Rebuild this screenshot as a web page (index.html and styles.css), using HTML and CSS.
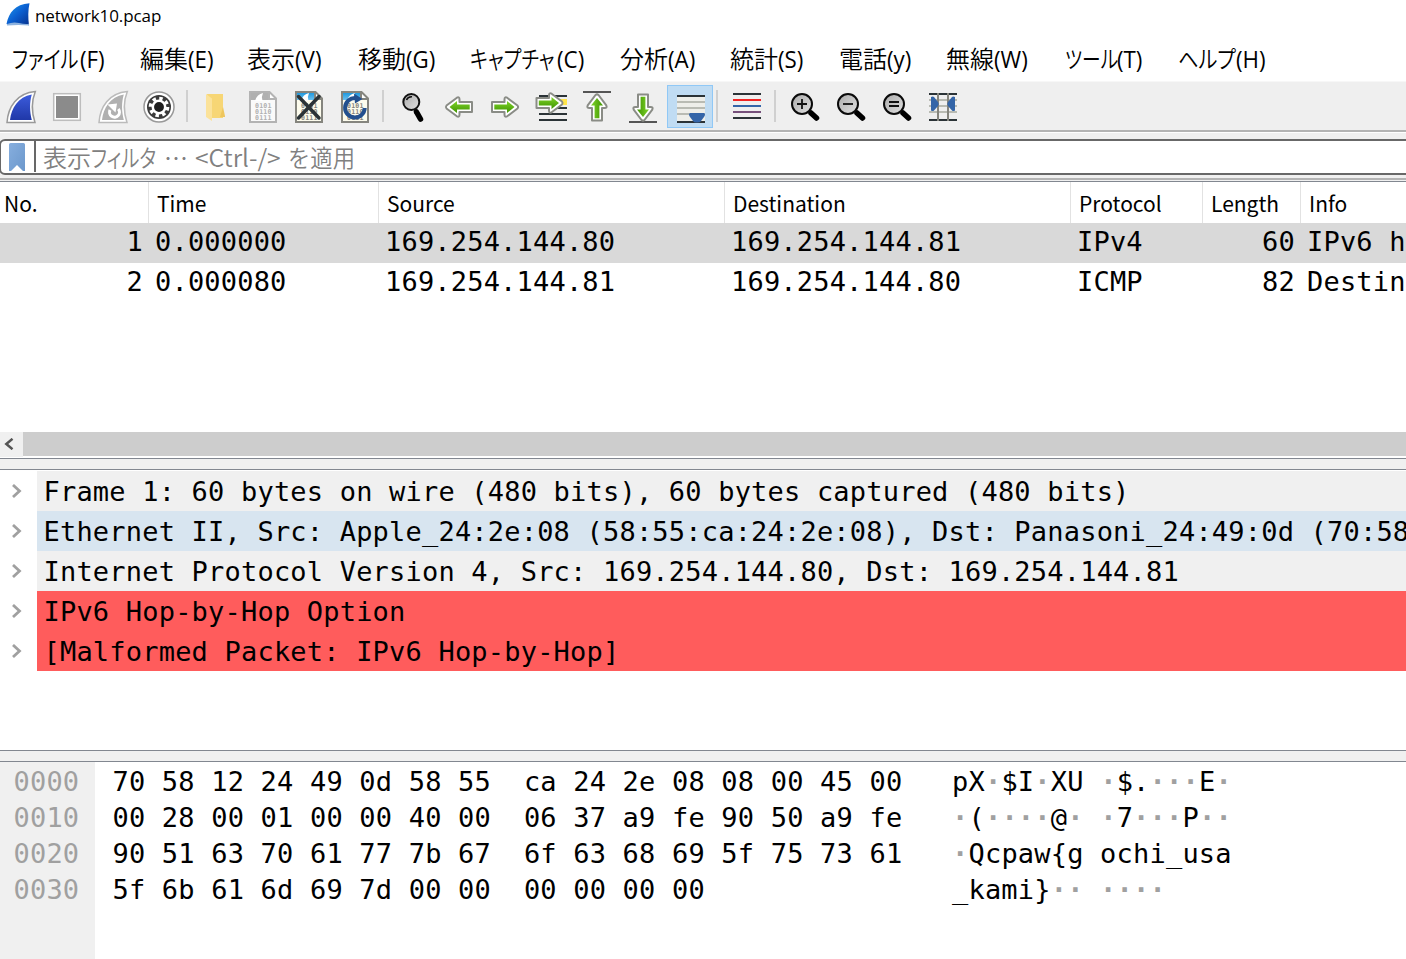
FILE: index.html
```html
<!DOCTYPE html>
<html lang="ja">
<head>
<meta charset="utf-8">
<title>network10.pcap</title>
<link rel="stylesheet" href="styles.css">
</head>
<body>
<svg class="defs" width="0" height="0">
  <defs>
    <linearGradient id="fin" x1="0" y1="0" x2="1" y2="1"><stop offset="0" stop-color="#1e9cf0"/><stop offset=".5" stop-color="#0b5fd0"/><stop offset="1" stop-color="#06308c"/></linearGradient>
    <linearGradient id="blue" x1="0" y1="0" x2="0" y2="1"><stop offset="0" stop-color="#3c5cdc"/><stop offset="1" stop-color="#2038a8"/></linearGradient>
    <linearGradient id="green" x1="0" y1="0" x2="0" y2="1"><stop offset="0" stop-color="#7fd42a"/><stop offset="1" stop-color="#3f9400"/></linearGradient>
    <linearGradient id="glass" x1="0" y1="0" x2="1" y2="1"><stop offset="0" stop-color="#aaa"/><stop offset="1" stop-color="#e2e2e2"/></linearGradient>
    <linearGradient id="ribbon" x1="0" y1="0" x2="1" y2="1"><stop offset="0" stop-color="#86aede"/><stop offset="1" stop-color="#6c98cc"/></linearGradient>
    <linearGradient id="sky" x1="0" y1="0" x2="0" y2="1"><stop offset="0" stop-color="#1593dc"/><stop offset="1" stop-color="#6cc0ee"/></linearGradient>
    <g id="arrow">
      <path d="M-12.500-5H0v-2.500q0-3 2.600-1.800L13-1.500q1.200 1.500 0 3L2.600 9.300Q0 10.500 0 7.500V5h-12.500z" fill="#fff" stroke="#8a8c86" stroke-width="2" stroke-linejoin="round"/>
      <path d="M-10.200-2.400H2.500V-6L10 0 2.500 6V2.400H-10.200z" fill="url(#green)"/>
    </g>
    <g id="lens">
      <path d="M7.500 7.500L13 12.500" stroke="#000" stroke-width="5.500" stroke-linecap="round"/>
      <circle cx="-1.500" cy="-1.500" r="10" fill="url(#glass)" stroke="#0a0a0a" stroke-width="2"/>
    </g>
    <g id="bits" font-family="DejaVu Sans Mono, monospace" font-size="6.600" font-weight="bold" letter-spacing=".2">
      <text x="6" y="16.800">0101</text><text x="6" y="22.800">0110</text><text x="6" y="28.700">0111</text>
    </g>
  </defs>
</svg>

<header class="titlebar">
  <svg width="26" height="26" viewBox="5 1 26 26"><path d="M6.500 24C9 12 15 4.500 29.500 3.200c-1.500 7-1.500 14-.5 22-5-2-16 1.500-22.500-1.200z" fill="url(#fin)"/><path d="M7 24q6-2.500 12-1t10 .8v1.700q-10-.8-22 0z" fill="#8db2de"/></svg>
  <span class="title">network10.pcap</span>
</header>

<nav class="menubar">
  <a class="m1"><span class="kana k1">ファイル</span><span class="lat">(F)</span></a>
  <a class="m2">編集<span class="lat">(E)</span></a>
  <a class="m3">表示<span class="lat">(V)</span></a>
  <a class="m4">移動<span class="lat">(G)</span></a>
  <a class="m5"><span class="kana k5">キャプチャ</span><span class="lat">(C)</span></a>
  <a class="m6">分析<span class="lat">(A)</span></a>
  <a class="m7">統計<span class="lat">(S)</span></a>
  <a class="m8">電話<span class="lat">(y)</span></a>
  <a class="m9">無線<span class="lat">(W)</span></a>
  <a class="m10"><span class="kana k10">ツール</span><span class="lat">(T)</span></a>
  <a class="m11"><span class="kana k11">ヘルプ</span><span class="lat">(H)</span></a>
</nav>

<div class="toolbar">
  <svg class="tool" viewBox="-2 82 46 48"><path d="M7 122.500C8 107 17 93 35.300 91.500 31.500 101 31.500 112 35 122.500z" fill="#fff" stroke="#999" stroke-width="1.500"/><path d="M10 120c1.500-12 8-23 21.800-25.500-2.400 8-2.200 17 0 25.500z" fill="url(#blue)"/></svg>
  <svg class="tool" viewBox="44 82 46 48"><rect x="53.700" y="93.700" width="26.600" height="26.600" fill="#fff" stroke="#bdbdbd" stroke-width="1.500"/><rect x="56" y="96" width="22" height="22" fill="#8b8b8b"/></svg>
  <svg class="tool" viewBox="90 82 46 48"><path d="M99 122.500C100 107 109 93 127.300 91.500 123.500 101 123.500 112 127 122.500z" fill="#fff" stroke="#bbb" stroke-width="1.500"/><path d="M102 120c1.500-12 8-23 21.800-25.500-2.400 8-2.200 17 0 25.500z" fill="#b0b0b0"/><path d="M118.300 109a5 5 0 1 1-8.300 1" fill="none" stroke="#fff" stroke-width="3"/><path d="M107.500 104.500l9.500-1-1.500 9z" fill="#fff"/></svg>
  <svg class="tool" viewBox="136 82 46 48"><circle cx="159" cy="107" r="15" fill="#fff" stroke="#999" stroke-width="1.500"/><circle cx="159" cy="107" r="12" fill="#3b3b3b"/><circle cx="159" cy="107" r="8.600" fill="none" stroke="#fff" stroke-width="3.500" stroke-dasharray="3.400 3.354"/><circle cx="159" cy="107" r="6.200" fill="#1e1e1e" stroke="#fff" stroke-width="2.500"/></svg>
  <i class="sep"></i>
  <svg class="tool" viewBox="194 82 46 48"><path d="M207 94h16v24h-12z" fill="#f7d675"/><path d="M223 107l2 9v1h-5z" fill="#eec65e"/><path d="M206 94l6 4.500v22.500l-6-4z" fill="#fbe29a"/></svg>
  <svg class="tool" viewBox="240 82 46 48"><path d="M250 92h20l6 6v24h-26z" fill="#fafafa"/><path d="M250 92h19v8h-19z" fill="#b0b0b0"/><path d="M255 101q2-7 8-8-2 4-.5 8z" fill="#fff"/><g transform="translate(249 91)" fill="#b0b0b0"><use href="#bits"/></g><path d="M269 92v7h7z" fill="#fff"/><path d="M250 92h19.500l6.500 6.500v23.500h-26zM269 92v7h7" fill="none" stroke="#b3b3b3" stroke-width="2"/></svg>
  <svg class="tool" viewBox="286 82 46 48"><path d="M296 92h20l6 6v24h-26z" fill="#fdfced"/><path d="M296 92h19v8h-19z" fill="url(#sky)"/><path d="M301 101q2-7 8-8-2 4-.5 8z" fill="#fff"/><g transform="translate(295 91)" fill="#85857d"><use href="#bits"/></g><path d="M315 92v7h7z" fill="#fff"/><path d="M296 92h19.500l6.500 6.500v23.500h-26zM315 92v7h7" fill="none" stroke="#85857e" stroke-width="2"/><path d="M298.500 96.500L319 118M319 96.500L298.500 118" stroke="#2b3337" stroke-width="3.500" stroke-linecap="round"/></svg>
  <svg class="tool" viewBox="332 82 46 48"><path d="M342 92h20l6 6v24h-26z" fill="#fdfced"/><path d="M342 92h19v8h-19z" fill="url(#sky)"/><path d="M347 101q2-7 8-8-2 4-.5 8z" fill="#fff"/><g transform="translate(341 91)" fill="#85857d"><use href="#bits"/></g><path d="M361 92v7h7z" fill="#fff"/><path d="M342 92h19.500l6.500 6.500v23.500h-26zM361 92v7h7" fill="none" stroke="#85857e" stroke-width="2"/><path d="M364.700 108a9.800 9.800 0 1 1-9.200-10" fill="none" stroke="#23508e" stroke-width="4"/><path d="M354 93.500l8.500 5.500-7.500 4.500z" fill="#23508e"/></svg>
  <i class="sep"></i>
  <svg class="tool" viewBox="390 82 46 48"><path d="M416.500 112l4 7" stroke="#000" stroke-width="5.500" stroke-linecap="round"/><path d="M413 107l3 4" stroke="#000" stroke-width="2.500"/><circle cx="411.300" cy="102" r="8" fill="url(#glass)" stroke="#111" stroke-width="2"/><path d="M406.500 100q1.500-3.500 5.500-3.200" fill="none" stroke="#111" stroke-width="1.500"/></svg>
  <svg class="tool" viewBox="436 82 46 48"><use href="#arrow" transform="translate(459.500 107) scale(-1 1)"/></svg>
  <svg class="tool" viewBox="482 82 46 48"><use href="#arrow" transform="translate(504.500 107)"/></svg>
  <svg class="tool" viewBox="528 82 46 48"><path d="M539 96h28M539 108h28M539 114h28M539 120h28" stroke="#2b3337" stroke-width="2"/><path d="M555 99h12v6h-12z" fill="#ffe44a"/><use href="#arrow" transform="translate(549 103)"/></svg>
  <svg class="tool" viewBox="574 82 46 48"><path d="M583 92h28" stroke="#555" stroke-width="2"/><use href="#arrow" transform="translate(597 108) rotate(-90)"/></svg>
  <svg class="tool" viewBox="620 82 46 48"><path d="M629 122h28" stroke="#555" stroke-width="2"/><use href="#arrow" transform="translate(643 107) rotate(90)"/></svg>
  <span class="checked"><svg width="44" height="41" viewBox="668 86 44 41"><rect x="677" y="95" width="28" height="28" fill="#eeeee9"/><path d="M677 102h28M677 108h28M677 114h28" stroke="#b9bbb3" stroke-width="2"/><path d="M677 96h28M677 122h28" stroke="#2b3337" stroke-width="2"/><path d="M690 113h14q2 1 0 4l-3 4q-1 1.500-3 1.500h-2q-2 0-3-1.500l-3-4q-2-3 0-4z" fill="#3465a8"/></svg></span>
  <i class="sep"></i>
  <svg class="tool" viewBox="724 82 46 48"><g stroke-width="2"><path d="M733 94h28M733 118h28" stroke="#2b3337"/><path d="M733 100h28" stroke="#f02424"/><path d="M733 106h28" stroke="#3465a8"/><path d="M733 112h28" stroke="#75507b"/></g></svg>
  <i class="sep"></i>
  <svg class="tool" viewBox="782 82 46 48"><use href="#lens" transform="translate(803.500 105.500)"/><path d="M797 104h10M802 99v10" stroke="#111" stroke-width="1.800"/></svg>
  <svg class="tool" viewBox="828 82 46 48"><use href="#lens" transform="translate(849.500 105.500)"/><path d="M843 104h10" stroke="#111" stroke-width="1.800"/></svg>
  <svg class="tool" viewBox="874 82 46 48"><use href="#lens" transform="translate(895.500 105.500)"/><path d="M889 102h10M889 106h10" stroke="#111" stroke-width="1.800"/></svg>
  <svg class="tool" viewBox="920 82 46 48"><path d="M929 100h28M929 106h28M929 112h28" stroke="#b9bbb3" stroke-width="2"/><path d="M929 94h28M929 120h28" stroke="#2b3337" stroke-width="2"/><path d="M938 93v28M948 93v28" stroke="#85857e" stroke-width="2"/><path d="M931 97q2-1 3 0l4 5q1.500 2 0 4l-4 4.500q-1 1-3 0zM955 97q-2-1-3 0l-4 5q-1.500 2 0 4l4 4.500q1 1 3 0z" fill="#3465a8"/></svg>
</div>

<div class="filterbar">
  <div class="filter">
    <span class="bookmark"><svg width="16" height="28" viewBox="0 0 16 28"><path d="M0 1.500Q0 0 1.500 0h13Q16 0 16 1.500V28h-2L8 22 2 28H0z" fill="url(#ribbon)"/></svg></span>
    <span class="hint"><span class="h1">表示</span><span class="h2 kana">フィルタ</span><span class="h3">…</span><span class="h4">&lt;Ctrl-/&gt;</span><span class="h5">を適用</span></span>
  </div>
  <div class="rule"></div>
</div>

<main class="panes">
  <section class="packets">
    <div class="row head">
      <span>No.</span><span>Time</span><span>Source</span><span>Destination</span><span>Protocol</span><span>Length</span><span>Info</span>
    </div>
    <div class="row data selected">
      <span>1</span><span>0.000000</span><span>169.254.144.80</span><span>169.254.144.81</span><span>IPv4</span><span>60</span><span>IPv6 hop</span>
    </div>
    <div class="row data">
      <span>2</span><span>0.000080</span><span>169.254.144.81</span><span>169.254.144.80</span><span>ICMP</span><span>82</span><span>Destination</span>
    </div>
    <div class="scroll"><span class="scroll-btn"><svg width="12" height="12" viewBox="0 0 12 12"><path d="M9.500 .8L3.300 6l6.200 5.200" fill="none" stroke="#555" stroke-width="2.500"/></svg></span><span class="thumb"></span></div>
  </section>
  <div class="splitter"></div>
  <section class="details">
    <div class="node"><svg class="chev" viewBox="0 0 12 14"><path d="M2 1l6.500 6L2 13" /></svg><span class="label">Frame 1: 60 bytes on wire (480 bits), 60 bytes captured (480 bits)</span></div>
    <div class="node eth"><svg class="chev" viewBox="0 0 12 14"><path d="M2 1l6.500 6L2 13" /></svg><span class="label">Ethernet II, Src: Apple_24:2e:08 (58:55:ca:24:2e:08), Dst: Panasoni_24:49:0d (70:58</span></div>
    <div class="node"><svg class="chev" viewBox="0 0 12 14"><path d="M2 1l6.500 6L2 13" /></svg><span class="label">Internet Protocol Version 4, Src: 169.254.144.80, Dst: 169.254.144.81</span></div>
    <div class="node bad"><svg class="chev" viewBox="0 0 12 14"><path d="M2 1l6.500 6L2 13" /></svg><span class="label">IPv6 Hop-by-Hop Option</span></div>
    <div class="node bad"><svg class="chev" viewBox="0 0 12 14"><path d="M2 1l6.500 6L2 13" /></svg><span class="label">[Malformed Packet: IPv6 Hop-by-Hop]</span></div>
  </section>
  <div class="splitter"></div>
  <section class="bytes">
    <pre class="offsets">0000
0010
0020
0030</pre>
    <pre class="hex">70 58 12 24 49 0d 58 55  ca 24 2e 08 08 00 45 00
00 28 00 01 00 00 40 00  06 37 a9 fe 90 50 a9 fe
90 51 63 70 61 77 7b 67  6f 63 68 69 5f 75 73 61
5f 6b 61 6d 69 7d 00 00  00 00 00 00</pre>
    <pre class="ascii">pX<i>·</i>$I<i>·</i>XU <i>·</i>$.<i>···</i>E<i>·</i>
<i>·</i>(<i>····</i>@<i>·</i> <i>·</i>7<i>···</i>P<i>··</i>
<i>·</i>Qcpaw{g ochi_usa
_kami}<i>·· ····</i></pre>
  </section>
</main>
</body>
</html>
```

FILE: styles.css
```css
* { box-sizing: border-box; }
body {
  margin: 0;
  width: 1406px;
  height: 959px;
  overflow: hidden;
  background: #fff;
  color: #000;
  display: flex;
  flex-direction: column;
  font-family: "Open Sans", "Noto Sans CJK JP", sans-serif;
}
.defs { position: absolute; }

.titlebar { height: 31px; display: flex; align-items: flex-start; padding: 1px 0 0 5px; }
.title { font-size: 17px; line-height: 30px; margin-left: 4px; white-space: nowrap; letter-spacing: -.1px; }

.menubar {
  height: 50px;
  display: flex;
  padding-left: 12px;
  font: 350 24px/53px "Noto Sans CJK JP", sans-serif;
  white-space: nowrap;
}
.menubar a { display: flex; flex: none; }
.lat { font: 400 23px/56px "Open Sans", sans-serif; transform-origin: 0 50%; transform: scaleX(.97); }
.kana { display: inline-block; transform-origin: 0 50%; font-feature-settings: "palt"; }
.m1 { width: 128px; } .m2 { width: 107px; } .m3 { width: 111px; } .m4 { width: 112px; }
.m5 { width: 150px; } .m6 { width: 110px; } .m7 { width: 109px; } .m8 { width: 107px; }
.m9 { width: 119px; } .m10 { width: 113px; } .m11 { width: 100px; }
.k1 { width: 68px; transform: scaleX(.8); }
.k5 { width: 87px; transform: scaleX(.8); }
.k10 { width: 52px; transform: scaleX(.78); }
.k11 { width: 58px; transform: scaleX(.84); }

.toolbar {
  height: 51px;
  display: flex;
  background: #efefef;
  border-top: 1px solid #f7f7f7;
  border-bottom: 2px solid #b4b4b4;
}
.tool { width: 46px; height: 48px; flex: none; }
.tool:first-child { margin-left: -2px; }
.checked { width: 46px; height: 43px; flex: none; margin: 3px -1px 0 1px; background: #c0dcf3; border: 1px solid #90c8f6; }
.checked svg { display: block; }
.sep { width: 12px; flex: none; padding: 8px 0 8px 4px; }
.sep::before { content: ""; display: block; width: 2px; height: 32px; background: #d0d0d0; }

.filterbar { height: 50px; padding-top: 6px; background: #f0f0f0; border-top: 1px solid #fff; border-bottom: 1px solid #828790; }
.filter { height: 36px; width: 1420px; border: 2px solid #686868; border-radius: 6px; background: #fff; display: flex; margin-left: -1px; }
.rule { height: 2px; margin-top: 3px; background: #b4b4b4; }
.bookmark { width: 35px; margin: 0 0 1px; border-right: 2px solid #686868; padding: 2px 0 0 8px; }
.bookmark svg { display: block; }
.hint { display: flex; padding-left: 7px; color: #808080; font: 350 24px/31px "Noto Sans CJK JP", sans-serif; white-space: nowrap; }
.hint span { transform-origin: 0 50%; flex: none; }
.h1 { width: 48px; }
.h2 { width: 73px; transform: scaleX(.8); }
.h3 { width: 31px; }
.h4 { width: 93px; transform: scaleX(1.03); }
.h5 { transform: scaleX(.93); }

.row { display: grid; grid-template-columns: 149px 230px 346px 346px 132px 98px 300px; white-space: nowrap; }
.head { height: 41px; font: 400 21px/42px "Noto Sans CJK JP", sans-serif; }
.head span { border-right: 1px solid #e2e2e2; padding-left: 8px; }
.head span:first-child { padding-left: 4px; }
.data, .label, .bytes { font: 27px/40px "DejaVu Sans Mono", monospace; letter-spacing: .19px; }
.data { height: 40px; line-height: 38px; }
.data span { padding-left: 6px; }
.data span:first-child, .data span:nth-child(6) { text-align: right; padding: 0 6px 0 0; }
.selected { background: #d9d9d9; }

.packets { height: 276px; display: flex; flex-direction: column; overflow: hidden; }
.scroll { margin-top: auto; height: 26px; display: flex; }
.scroll-btn { width: 23px; height: 25px; background: #f0f0f0; padding: 6px 0 0 3px; }
.scroll-btn svg { display: block; }
.thumb { flex: 1; background: #cdcdcd; height: 24px; }

.splitter { height: 12px; background: #f0f0f0; border: 1px solid #828790; border-width: 1px 0; }
.details { height: 280px; padding-top: 1px; overflow: hidden; }
.node { height: 40px; display: flex; align-items: center; }
.chev { width: 12px; height: 14px; margin: 0 14px 0 11px; flex: none; fill: none; stroke: #a0a0a0; stroke-width: 2.8; }
.label { flex: 1; height: 40px; line-height: 42px; background: #f0f0f0; padding-left: 6.5px; white-space: pre; letter-spacing: .2px; }
.eth .label { background: #d8e5f0; }
.bad .label { background: #ff5c5c; }

.bytes { display: flex; height: 197px; line-height: 36px; letter-spacing: .2px; }
.bytes pre { margin: 0; font: inherit; padding-top: 2px; }
.bytes .offsets { width: 95px; background: #f0f0f0; color: #a0a0a0; padding-left: 13.5px; }
.bytes .hex { width: 857px; padding-left: 17.5px; }
.ascii i { font-style: normal; font-weight: 700; color: #a0a0a0; }
```
